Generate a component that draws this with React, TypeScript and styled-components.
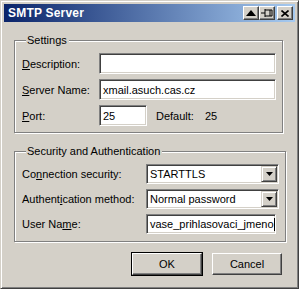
import styled, { createGlobalStyle } from 'styled-components';

const GlobalStyle = createGlobalStyle`
  html, body {
    margin: 0;
    padding: 0;
    background: #d4d0c8;
  }
  body {
    font-family: "Liberation Sans", Arial, sans-serif;
    font-size: 11px;
    color: #000;
  }
`;

// Outer window with classic raised frame
const Window = styled.div`
  box-sizing: border-box;
  width: 299px;
  height: 289px;
  background: #d4d0c8;
  border: 1px solid;
  border-color: #d4d0c8 #404040 #404040 #d4d0c8;
  box-shadow: inset 1px 1px #fff, inset -1px -1px #808080;
  padding: 3px;
  display: flex;
  flex-direction: column;
`;

const TitleBar = styled.div`
  height: 18px;
  display: flex;
  align-items: center;
  padding: 0 2px 0 3px;
  background: linear-gradient(to right, #0a246a, #a6caf0);
  color: #fff;
  font-weight: bold;
  font-size: 12px;
`;

const Title = styled.span`
  flex: 1;
  padding-left: 1px;
  letter-spacing: 0.2px;
`;

const TitleButtons = styled.div`
  display: flex;
`;

const TitleButton = styled.div<{ $gap?: boolean }>`
  box-sizing: border-box;
  width: 16px;
  height: 14px;
  margin-left: ${({ $gap }) => ($gap ? '2px' : '0')};
  background: #d4d0c8;
  border: 1px solid;
  border-color: #fff #404040 #404040 #fff;
  box-shadow: inset -1px -1px #808080;
  display: flex;
  align-items: center;
  justify-content: center;
`;

const Body = styled.div`
  flex: 1;
  display: flex;
  flex-direction: column;
  padding: 12px 10px 0 10px;
`;

const Group = styled.fieldset<{ $gap: number; $bottom: number }>`
  margin: 0;
  padding: 6px 6px ${({ $bottom }) => $bottom}px 7px;
  border: 1px solid #808080;
  box-shadow: inset 1px 1px #fff, 1px 1px #fff;
  display: flex;
  flex-direction: column;
  gap: ${({ $gap }) => $gap}px;
  width: 269px;
  box-sizing: border-box;
`;

const Legend = styled.legend`
  padding: 0 2px 0 1px;
  margin-left: 4px;
  background: #d4d0c8;
  font-size: 11px;
  line-height: 13px;
`;

const Row = styled.div<{ $h: number }>`
  display: flex;
  align-items: center;
  height: ${({ $h }) => $h}px;
`;

const Label = styled.span<{ $width: number }>`
  width: ${({ $width }) => $width}px;
  flex: none;
`;

const Key = styled.span`
  text-decoration: underline;
  text-underline-offset: 1px;
`;

const Field = styled.div<{ $width: number }>`
  box-sizing: border-box;
  width: ${({ $width }) => $width}px;
  height: 100%;
  background: #fff;
  border: 1px solid;
  border-color: #808080 #fff #fff #808080;
  box-shadow: inset 1px 1px #404040, inset -1px -1px #d4d0c8;
  display: flex;
  align-items: center;
  padding: 0 3px;
  font-size: 11px;
  white-space: nowrap;
  overflow: hidden;
`;

const Caret = styled.span`
  display: inline-block;
  flex: none;
  width: 1px;
  height: 13px;
  background: #000;
`;

const Default = styled.span`
  margin-left: 9px;
`;

const DefaultValue = styled.span`
  margin-left: 11px;
`;

const Select = styled(Field)`
  padding: 0 2px 0 3px;
`;

const SelectText = styled.span`
  flex: 1;
`;

const ArrowButton = styled.div`
  box-sizing: border-box;
  width: 16px;
  height: 16px;
  background: #d4d0c8;
  border: 1px solid;
  border-color: #d4d0c8 #404040 #404040 #d4d0c8;
  box-shadow: inset 1px 1px #fff, inset -1px -1px #808080;
  display: flex;
  align-items: center;
  justify-content: center;
  margin-right: -1px;
`;

const Spacer = styled.div`
  height: 12px;
`;

const ButtonRow = styled.div`
  display: flex;
  justify-content: flex-end;
  gap: 10px;
  padding: 11px 3px 0 0;
`;

const Button = styled.div`
  box-sizing: border-box;
  width: 70px;
  height: 22px;
  background: #d4d0c8;
  border: 1px solid;
  border-color: #fff #404040 #404040 #fff;
  box-shadow: inset -1px -1px #808080;
  display: flex;
  align-items: center;
  justify-content: center;
  font-size: 11px;
`;

const DefaultButton = styled(Button)`
  outline: 1px solid #000;
`;

const Arrow = () => (
  <svg width="7" height="4" viewBox="0 0 7 4">
    <path d="M0 0h7L3.5 4z" fill="#000" />
  </svg>
);

export default function App() {
  return (
    <>
      <GlobalStyle />
      <Window>
        <TitleBar>
          <Title>SMTP Server</Title>
          <TitleButtons>
            <TitleButton>
              <svg width="10" height="6" viewBox="0 0 10 6">
                <path d="M5 0L10 6H0z" fill="#000" />
              </svg>
            </TitleButton>
            <TitleButton>
              <svg width="12" height="10" viewBox="0 0 12 10">
                <path d="M0 5h4M4 1v8M4 2h7v6H4M9 2v6" stroke="#000" strokeWidth="1" fill="none" />
              </svg>
            </TitleButton>
            <TitleButton $gap>
              <svg width="8" height="7" viewBox="0 0 8 7">
                <path d="M0.5 0.5L7.5 6.5M7.5 0.5L0.5 6.5" stroke="#000" strokeWidth="1.6" />
              </svg>
            </TitleButton>
          </TitleButtons>
        </TitleBar>
        <Body>
          <Group $gap={5} $bottom={6}>
            <Legend>Settings</Legend>
            <Row $h={21}>
              <Label $width={77}><Key>D</Key>escription:</Label>
              <Field $width={177} />
            </Row>
            <Row $h={21}>
              <Label $width={77}><Key>S</Key>erver Name:</Label>
              <Field $width={177}>xmail.asuch.cas.cz</Field>
            </Row>
            <Row $h={21}>
              <Label $width={77}><Key>P</Key>ort:</Label>
              <Field $width={48}>25</Field>
              <Default>Default:</Default>
              <DefaultValue>25</DefaultValue>
            </Row>
          </Group>
          <Spacer />
          <Group $gap={5} $bottom={7}>
            <Legend>Security and Authentication</Legend>
            <Row $h={20}>
              <Label $width={124}>Co<Key>n</Key>nection security:</Label>
              <Select $width={133}>
                <SelectText>STARTTLS</SelectText>
                <ArrowButton><Arrow /></ArrowButton>
              </Select>
            </Row>
            <Row $h={20}>
              <Label $width={124}>Authent<Key>i</Key>cation method:</Label>
              <Select $width={133}>
                <SelectText>Normal password</SelectText>
                <ArrowButton><Arrow /></ArrowButton>
              </Select>
            </Row>
            <Row $h={20}>
              <Label $width={124}>User Na<Key>m</Key>e:</Label>
              <Field $width={130}>
                vase_prihlasovaci_jmeno<Caret />
              </Field>
            </Row>
          </Group>
          <ButtonRow>
            <DefaultButton>OK</DefaultButton>
            <Button>Cancel</Button>
          </ButtonRow>
        </Body>
      </Window>
    </>
  );
}
